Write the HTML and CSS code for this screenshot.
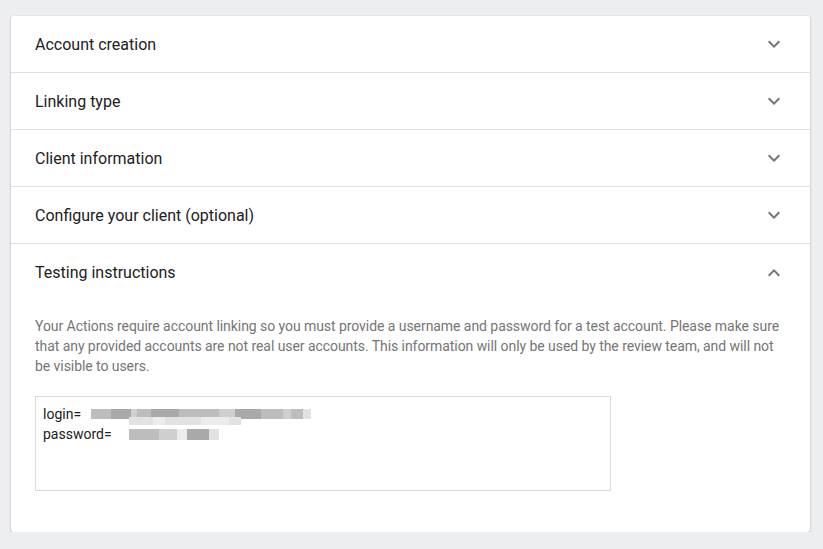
FILE: index.html
```html
<!DOCTYPE html>
<html>
<head>
<meta charset="utf-8">
<link rel="stylesheet" href="styles.css">
</head>
<body>
<div class="card">
  <div class="row">
    <span class="title">Account creation</span>
    <svg class="chev" viewBox="0 0 24 24" width="24" height="24"><path d="M7.41 8.59 12 13.17l4.59-4.58L18 10l-6 6-6-6z"/></svg>
  </div>
  <div class="row">
    <span class="title">Linking type</span>
    <svg class="chev" viewBox="0 0 24 24" width="24" height="24"><path d="M7.41 8.59 12 13.17l4.59-4.58L18 10l-6 6-6-6z"/></svg>
  </div>
  <div class="row">
    <span class="title">Client information</span>
    <svg class="chev" viewBox="0 0 24 24" width="24" height="24"><path d="M7.41 8.59 12 13.17l4.59-4.58L18 10l-6 6-6-6z"/></svg>
  </div>
  <div class="row">
    <span class="title">Configure your client (optional)</span>
    <svg class="chev" viewBox="0 0 24 24" width="24" height="24"><path d="M7.41 8.59 12 13.17l4.59-4.58L18 10l-6 6-6-6z"/></svg>
  </div>
  <div class="row open">
    <span class="title">Testing instructions</span>
    <svg class="chev" viewBox="0 0 24 24" width="24" height="24"><path d="M7.41 15.41 12 10.83l4.59 4.58L18 14l-6-6-6 6z"/></svg>
  </div>
  <div class="body">
    <p class="desc">Your Actions require account linking so you must provide a username and password for a test account. Please make sure that any provided accounts are not real user accounts. This information will only be used by the review team, and will not be visible to users.</p>
    <div class="field">
      <div class="line">login= <span class="redact r1"><i class="b2" style="width:20px"></i><i class="b1" style="width:20px"></i><i class="b3" style="width:6px"></i><i class="b2" style="width:14px"></i><i class="b1" style="width:28px"></i><i class="b2" style="width:40px"></i><i class="b3" style="width:16px"></i><i class="b1" style="width:26px"></i><i class="b2" style="width:22px"></i><i class="b3" style="width:8px"></i><i class="b2" style="width:12px"></i><i class="b4" style="width:8px"></i></span></div>
      <div class="line">password= <span class="redact r2"><i class="b2" style="width:30px"></i><i class="b3" style="width:18px"></i><i class="b5" style="width:10px"></i><i class="b1" style="width:22px"></i><i class="b4" style="width:10px"></i></span></div>
      <span class="ghost"><i class="b4" style="width:24px"></i><i class="b5" style="width:12px"></i><i class="b4" style="width:36px"></i><i class="b5" style="width:28px"></i><i class="b4" style="width:12px"></i></span>
    </div>
  </div>
</div>
</body>
</html>
```
FILE: styles.css
```css
* { box-sizing: border-box; }
body {
  margin: 0;
  background: #eceef0;
  font-family: Roboto, "Liberation Sans", sans-serif;
}
.card {
  margin: 16px 13px 0 11px;
  background: #fff;
  border-radius: 2px;
  box-shadow: 0 1px 2px rgba(0,0,0,0.35), 0 0 1px rgba(0,0,0,0.12);
  height: 516px;
}
.row {
  height: 57px;
  border-bottom: 1px solid #e0e0e0;
  display: flex;
  align-items: center;
  justify-content: space-between;
  padding: 0 24px 0 24px;
}
.row.open { border-bottom: none; }
.title {
  font-size: 16px;
  color: #212121;
}
.chev { fill: #757575; }
.body {
  padding: 15px 20px 41px 24px;
}
.desc {
  margin: 0;
  font-size: 14px;
  line-height: 20px;
  color: #757575;
  letter-spacing: -0.06px;
}
.field {
  position: relative;
  margin-top: 20px;
  width: 576px;
  height: 95px;
  border: 1px solid #dadada;
  padding: 7px 7px;
  font-size: 14px;
  line-height: 20px;
  color: #212121;
}
.line { display: flex; align-items: center; white-space: pre; }
.redact { display: inline-flex; height: 10px; }
.r1 { margin-left: 6px; }
.r2 { margin-left: 14px; height: 11px; }
.redact i, .ghost i { display: block; height: 100%; }
.ghost {
  position: absolute;
  left: 93px;
  top: 20px;
  height: 8px;
  display: flex;
}
.b1 { background: #a9a9a9; }
.b2 { background: #bdbdbd; }
.b3 { background: #cfcfcf; }
.b4 { background: #e2e2e2; }
.b5 { background: #ececec; }
```
